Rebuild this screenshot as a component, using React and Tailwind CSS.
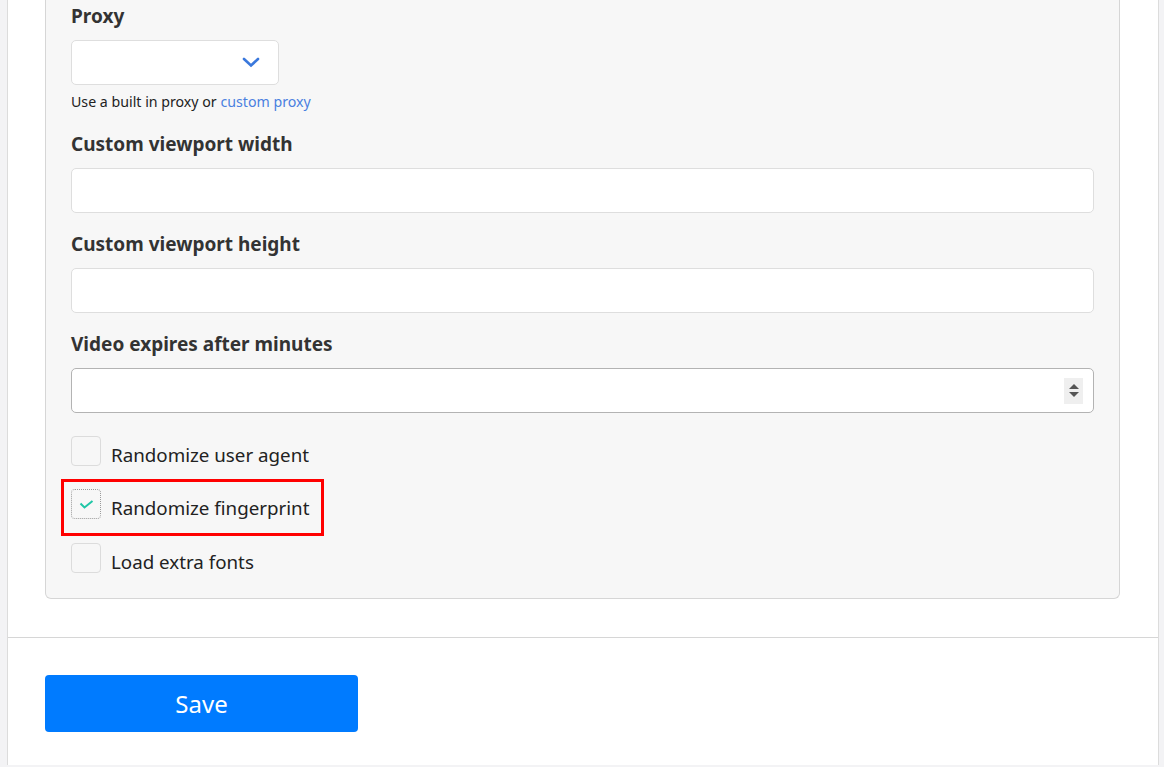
const Field = ({ label, children }) => (
  <div>
    <div className="text-[19px] leading-[27px] font-bold text-[#333] mb-[10px]">{label}</div>
    {children}
  </div>
);

const Checkbox = ({ checked }) => (
  <div
    className={`shrink-0 w-[30px] h-[30px] rounded-[4px] flex items-center justify-center bg-[#f7f7f7] ${
      checked ? 'border border-dotted border-[#9a9a9a]' : 'border border-[#dcdcdc]'
    }`}
  >
    {checked && (
      <svg width="15" height="9" viewBox="0 0 15 9" fill="none">
        <path d="M1.5 3.5 L5.5 7.5 L13.5 1" stroke="#1fc6a6" strokeWidth="2" />
      </svg>
    )}
  </div>
);

const CheckRow = ({ checked, children }) => (
  <div className="flex items-start gap-[10px]">
    <Checkbox checked={checked} />
    <span className="mt-[5px] text-[18.75px] leading-[27px] text-[#222]">{children}</span>
  </div>
);

export default function App() {
  return (
    <div className="min-h-screen bg-[#f3f3f5] flex" style={{ fontFamily: '"Noto Sans", "Open Sans", sans-serif' }}>
      <div className="ml-[7px] w-[1152px] h-[765px] bg-white border-x border-[#dcdcdc] flex flex-col">
        {/* settings panel */}
        <div className="pl-[37px] pr-[38px]">
          <div className="bg-[#f7f7f7] border-x border-b border-[#d6d6d6] rounded-b-[6px] px-[25px] pt-[3px] pb-[23px]">
            <Field label="Proxy">
              <div className="w-[208px] h-[45px] bg-white border border-[#dedede] rounded-[5px] flex items-center justify-end pr-[18px]">
                <svg width="18" height="11" viewBox="0 0 18 11" fill="none">
                  <path d="M2 2 L9 8.5 L16 2" stroke="#3a78dc" strokeWidth="2.6" strokeLinecap="round" />
                </svg>
              </div>
              <div className="mt-[6px] text-[14.2px] leading-[21px] text-[#222]">
                Use a built in proxy or <span className="text-[#4a80e0]">custom proxy</span>
              </div>
            </Field>

            <div className="mt-[19px]">
              <Field label="Custom viewport width">
                <div className="h-[45px] bg-white border border-[#dedede] rounded-[5px]" />
              </Field>
            </div>

            <div className="mt-[18px]">
              <Field label="Custom viewport height">
                <div className="h-[45px] bg-white border border-[#dedede] rounded-[5px]" />
              </Field>
            </div>

            <div className="mt-[18px]">
              <Field label="Video expires after minutes">
                <div className="h-[45px] bg-white border border-[#b3b3b3] rounded-[5px] flex items-center justify-end pr-[10px]">
                  <div className="w-[19px] h-[26px] bg-[#efefef] flex flex-col items-center justify-center gap-[3px]">
                    <div className="w-0 h-0 border-x-[5px] border-x-transparent border-b-[5px] border-b-[#555]" />
                    <div className="w-0 h-0 border-x-[5px] border-x-transparent border-t-[5px] border-t-[#555]" />
                  </div>
                </div>
              </Field>
            </div>

            <div className="mt-[23px] flex flex-col">
              <CheckRow>Randomize user agent</CheckRow>
              <div className="mt-[11px] -ml-[10px] w-[263px] border-[3px] border-[#ff0000] pl-[7px] pt-[7px] pb-[12px]">
                <CheckRow checked>Randomize fingerprint</CheckRow>
              </div>
              <div className="mt-[7px]">
                <CheckRow>Load extra fonts</CheckRow>
              </div>
            </div>
          </div>
        </div>

        <div className="mt-[38px] border-t border-[#d6d6d6]" />

        <div className="px-[37px] pt-[37px]">
          <button className="w-[313px] h-[57px] bg-[#007bff] rounded-[4px] text-white text-[24px]">
            Save
          </button>
        </div>
      </div>
    </div>
  );
}
